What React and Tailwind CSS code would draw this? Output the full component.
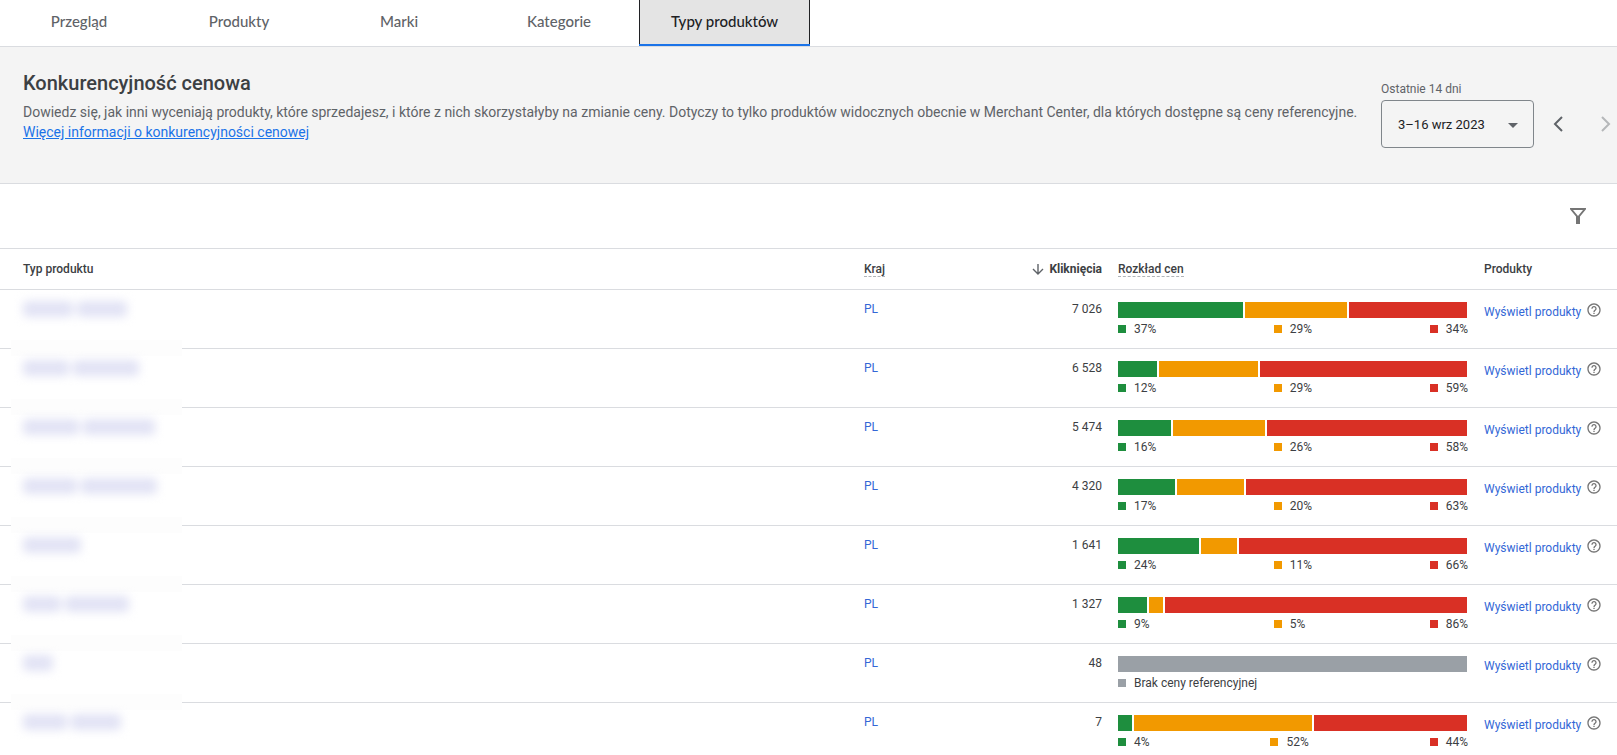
const tabs = ["Przegląd", "Produkty", "Marki", "Kategorie"];

const rows = [
  { name: [50, 50], clicks: "7 026", labels: ["37%", "29%", "34%"], parts: [125, 102, 118] },
  { name: [46, 66], clicks: "6 528", labels: ["12%", "29%", "59%"], parts: [39, 99, 207] },
  { name: [56, 72], clicks: "5 474", labels: ["16%", "26%", "58%"], parts: [53, 92, 200] },
  { name: [54, 76], clicks: "4 320", labels: ["17%", "20%", "63%"], parts: [57, 67, 221] },
  { name: [58], clicks: "1 641", labels: ["24%", "11%", "66%"], parts: [81, 36, 228] },
  { name: [38, 64], clicks: "1 327", labels: ["9%", "5%", "86%"], parts: [29, 14, 302] },
  { name: [30], clicks: "48", labels: null, parts: null },
  { name: [44, 50], clicks: "7", labels: ["4%", "52%", "44%"], parts: [14, 178, 153] },
];

const colors = ["bg-[#1e8e3e]", "bg-[#f29900]", "bg-[#d93025]"];

function LegendItem({ color, children }) {
  return (
    <span className="flex items-center gap-2">
      <span className={`size-2 ${color}`} />
      {children}
    </span>
  );
}

function Distribution({ row }) {
  if (!row.parts) {
    return (
      <>
        <div className="mr-px h-4 bg-[#9aa0a6]" />
        <div className="mt-[3px] flex leading-4">
          <LegendItem color="bg-[#9aa0a6]">Brak ceny referencyjnej</LegendItem>
        </div>
      </>
    );
  }
  return (
    <>
      <div className="mr-px flex h-4 gap-0.5">
        {row.parts.map((p, i) => (
          <div key={i} className={`basis-0 ${colors[i]}`} style={{ flexGrow: p }} />
        ))}
      </div>
      <div className="mt-[3px] flex justify-between leading-4">
        {row.labels.map((l, i) => (
          <LegendItem key={i} color={colors[i]}>{l}</LegendItem>
        ))}
      </div>
    </>
  );
}

function HelpIcon() {
  return (
    <svg viewBox="0 0 24 24" className="size-4" fill="#757575" aria-hidden="true">
      <path d="M11 18h2v-2h-2v2zm1-16C6.48 2 2 6.48 2 12s4.48 10 10 10 10-4.48 10-10S17.52 2 12 2zm0 18c-4.41 0-8-3.59-8-8s3.59-8 8-8 8 3.59 8 8-3.59 8-8 8zm0-14c-2.21 0-4 1.79-4 4h2c0-1.1.9-2 2-2s2 .9 2 2c0 2-3 1.75-3 5h2c0-2.25 3-2.5 3-5 0-2.21-1.79-4-4-4z" />
    </svg>
  );
}

export default function App() {
  return (
    <div className="bg-white font-['Roboto',sans-serif] text-xs text-[#3c4043]">
      <nav className="-ml-px flex h-[47px] border-b border-[#dadce0] font-['Lato',sans-serif] text-[15px] font-medium">
        {tabs.map((t) => (
          <button key={t} type="button" className="w-40 pb-0.5 text-[#5f6368]">{t}</button>
        ))}
        <button type="button" aria-current="page" className="flex flex-col border-x border-[#202124] bg-[#e4e4e4] text-[#202124]">
          <span className="flex flex-1 items-center px-[31px]">Typy produktów</span>
          <span className="-mx-px h-0.5 self-stretch bg-[#1a73e8]" />
        </button>
      </nav>

      <header className="flex h-[137px] items-start justify-between border-b border-[#dadce0] bg-[#f4f4f4] pl-[23px] text-[#5f6368]">
        <div className="pt-[22px] text-sm leading-5">
          <h1 className="mb-[5px] text-xl leading-7 font-medium text-[#3c4043]">Konkurencyjność cenowa</h1>
          <p>
            Dowiedz się, jak inni wyceniają produkty, które sprzedajesz, i które z nich skorzystałyby na zmianie ceny. Dotyczy to tylko produktów widocznych obecnie w Merchant Center, dla których dostępne są ceny referencyjne.
          </p>
          <a href="#info" className="text-[#1a73e8] underline">Więcej informacji o konkurencyjności cenowej</a>
        </div>
        <div className="shrink-0 pt-[34px]">
          <div className="mb-[3px] leading-4" id="range-label">Ostatnie 14 dni</div>
          <div className="flex items-center">
            <button type="button" aria-labelledby="range-label" className="flex h-12 w-[153px] items-center justify-between rounded border border-[#80868b] pt-0.5 pr-[15px] pl-4 text-[13px] text-[#202124]">
              3–16 wrz 2023
              <svg viewBox="0 0 10 5" className="h-[5px] w-2.5" fill="#5f6368"><path d="M0 0h10L5 5z" /></svg>
            </button>
            <button type="button" aria-label="Poprzedni okres" className="ml-[19px] text-[#5f6368]">
              <svg viewBox="0 0 10 16" className="h-4 w-2.5" fill="none" stroke="currentColor" strokeWidth="2"><path d="M9 1L2 8l7 7" /></svg>
            </button>
            <button type="button" aria-label="Następny okres" className="mr-1.5 ml-[38px] text-[#b5b7b9]">
              <svg viewBox="0 0 10 16" className="h-4 w-2.5" fill="none" stroke="currentColor" strokeWidth="2"><path d="M1 1l7 7-7 7" /></svg>
            </button>
          </div>
        </div>
      </header>

      <div className="flex h-16 items-center justify-end pr-[31px]">
        <button type="button" aria-label="Filtruj">
          <svg viewBox="0 0 16 16" className="size-4" fill="#757575"><path fillRule="evenodd" d="M0 0h16v1.2L10 8.6V16H6V8.6L0 1.2zM3 2l5 6 5-6z" /></svg>
        </button>
      </div>

      <table className="w-full table-fixed border-separate border-spacing-0 text-left">
        <colgroup>
          <col />
          <col className="w-[120px]" />
          <col className="w-[142px]" />
          <col className="w-[366px]" />
          <col className="w-[141px]" />
        </colgroup>
        <thead>
          <tr className="h-[42px] leading-4 *:border-y *:border-[#dadce0] *:font-medium">
            <th className="pl-[23px]">Typ produktu</th>
            <th className="pl-4"><span className="border-b border-dashed border-[#b0b4b8]">Kraj</span></th>
            <th className="pr-2">
              <span className="flex items-center justify-end gap-[5px] font-bold">
                <svg viewBox="0 0 12 12" className="size-3" fill="none" stroke="#5f6368" strokeWidth="1.4"><path d="M6 1v10M1 6l5 5 5-5" /></svg>
                Kliknięcia
              </span>
            </th>
            <th className="pl-2"><span className="border-b border-dashed border-[#b0b4b8]">Rozkład cen</span></th>
            <th className="pl-2">Produkty</th>
          </tr>
        </thead>
        <tbody>
          {rows.map((row, r) => {
            const last = r === rows.length - 1;
            return (
              <tr key={row.clicks} className={last ? "align-top" : "h-[59px] align-top *:border-b *:border-[#dadce0]"}>
                <td className="relative pt-[11px] pl-[23px]">
                  <div className="flex h-4 gap-1 blur-[5px]">
                    {row.name.map((w, i) => (
                      <span key={i} className="h-full rounded bg-[#e2e3f5]" style={{ width: w }} />
                    ))}
                  </div>
                  {!last && <span className="absolute -bottom-2 left-[11px] h-4 w-[171px] bg-[#fdfdfd]" />}
                </td>
                <td className="pt-[11px] pl-4 leading-4"><a href="#pl" className="text-[#3367d6]">PL</a></td>
                <td className="pt-[11px] pr-2 text-right leading-4">{row.clicks}</td>
                <td className="px-2 pt-3"><Distribution row={row} /></td>
                <td className="pt-3 pl-2">
                  <div className="flex items-start gap-[5px]">
                    <a href="#produkty" className="pt-0.5 leading-4 whitespace-nowrap text-[#3367d6]">Wyświetl produkty</a>
                    <button type="button" aria-label="Pomoc"><HelpIcon /></button>
                  </div>
                </td>
              </tr>
            );
          })}
        </tbody>
      </table>
    </div>
  );
}
